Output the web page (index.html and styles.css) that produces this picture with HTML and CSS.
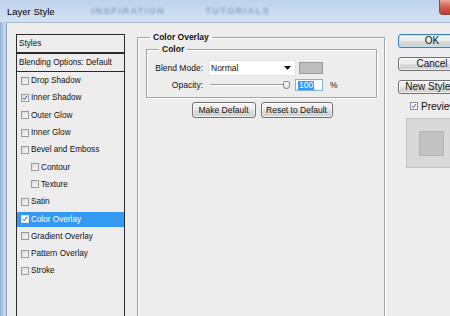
FILE: index.html
```html
<!DOCTYPE html>
<html lang="en">
<head>
  <meta charset="UTF-8" />
  <title>Layer Style</title>
  <link rel="stylesheet" href="styles.css">
</head>
<body>
  <div class="window">
    <!-- Title bar -->
    <div class="titlebar">
      <span class="title">Layer Style</span>
      <span class="watermark wm-first">INSPIRATION</span>
      <span class="watermark wm-second">TUTORIALS</span>
      <span class="close"></span>
    </div>

    <div class="frame">
      <div class="dialog">

        <!-- Styles list -->
        <div class="styles-panel">
          <div class="panel-head">Styles</div>
          <div class="panel-blend">Blending Options: Default</div>
          <ul class="style-list">
            <li class="item"><span class="check"></span>Drop Shadow</li>
            <li class="item"><span class="check checked"><svg viewBox="0 0 8 8"><path d="M1.4 4.2 L3.1 6.2 L6.6 1.4"/></svg></span>Inner Shadow</li>
            <li class="item"><span class="check"></span>Outer Glow</li>
            <li class="item"><span class="check"></span>Inner Glow</li>
            <li class="item"><span class="check"></span>Bevel and Emboss</li>
            <li class="item sub"><span class="check"></span>Contour</li>
            <li class="item sub"><span class="check"></span>Texture</li>
            <li class="item"><span class="check"></span>Satin</li>
            <li class="item selected"><span class="check checked"><svg viewBox="0 0 8 8"><path d="M1.4 4.2 L3.1 6.2 L6.6 1.4"/></svg></span>Color Overlay</li>
            <li class="item"><span class="check"></span>Gradient Overlay</li>
            <li class="item"><span class="check"></span>Pattern Overlay</li>
            <li class="item"><span class="check"></span>Stroke</li>
          </ul>
        </div>

        <!-- Settings -->
        <fieldset class="group-outer">
          <legend>Color Overlay</legend>
          <fieldset class="group-inner">
            <legend>Color</legend>
            <div class="row">
              <span class="label">Blend Mode:</span>
              <div class="select">
                <span>Normal</span>
                <svg class="arrow" viewBox="0 0 7 4"><path d="M0 0 H7 L3.5 4 Z"/></svg>
              </div>
              <span class="swatch"></span>
            </div>
            <div class="row row-opacity">
              <span class="label">Opacity:</span>
              <div class="slider">
                <span class="track"></span>
                <span class="thumb"></span>
              </div>
              <div class="num"><span class="sel-text">100</span></div>
              <span class="pct">%</span>
            </div>
          </fieldset>
          <div class="actions">
            <button class="btn btn-make">Make Default</button>
            <button class="btn btn-reset">Reset to Default</button>
          </div>
        </fieldset>

        <!-- Right column -->
        <div class="side">
          <button class="btn side-btn default">OK</button>
          <button class="btn side-btn">Cancel</button>
          <button class="btn side-btn">New Style...</button>
          <div class="preview-check">
            <span class="check checked"><svg viewBox="0 0 8 8"><path d="M1.4 4.2 L3.1 6.2 L6.6 1.4"/></svg></span>
            Preview
          </div>
          <div class="preview-box">
            <span class="preview-square"></span>
          </div>
        </div>

      </div>
    </div>
  </div>
</body>
</html>
```

FILE: styles.css
```css
* {
  box-sizing: border-box;
}

html, body {
  margin: 0;
  padding: 0;
}

body {
  width: 450px;
  height: 316px;
  overflow: hidden;
  font-family: 'Liberation Sans', Arial, sans-serif;
  color: #111;
}

.window {
  width: 450px;
  height: 316px;
  display: flex;
  flex-direction: column;
  background: linear-gradient(90deg, #8fb0d2, #c3d7ec 4px, #cddff1);
}

/* Title bar */
.titlebar {
  height: 22px;
  display: flex;
  align-items: center;
  background: linear-gradient(#bed3ea, #d3e2f2);
  flex-shrink: 0;
}

.title {
  margin-left: 7px;
  font-size: 9.5px;
  color: #000;
}

.watermark {
  font-size: 9px;
  font-weight: bold;
  letter-spacing: 1.5px;
  color: rgba(100, 125, 160, 0.6);
  filter: blur(1.1px);
}

.wm-first {
  margin-left: 37px;
}

.wm-second {
  margin-left: 40px;
}

.close {
  margin-left: auto;
  align-self: flex-start;
  width: 11px;
  height: 15px;
  border: 1px solid #8a4a44;
  border-right: none;
  border-top: none;
  border-radius: 0 0 0 4px;
  background: linear-gradient(#e9a99c, #d0604c 50%, #c0392b);
}

/* Frame and dialog body */
.frame {
  flex: 1;
  display: flex;
  padding-left: 6px;
  min-height: 0;
}

.dialog {
  flex: 1;
  display: flex;
  align-items: flex-start;
  background: #ededed;
  border-left: 1px solid #8da2b9;
  border-top: 1px solid #a9b9ca;
  padding: 11px 0 0 9px;
  overflow: hidden;
}

/* Styles panel */
.styles-panel {
  width: 109px;
  height: 300px;
  flex-shrink: 0;
  border: 1px solid #2a2a2a;
  font-size: 8.2px;
}

.panel-head,
.panel-blend {
  line-height: 17px;
  padding-left: 2px;
  white-space: nowrap;
}

.panel-head {
  height: 19px;
  border-bottom: 2px solid #2a2a2a;
}

.panel-blend {
  height: 18px;
  border-bottom: 1px solid #2a2a2a;
}

.style-list {
  list-style: none;
  margin: 0;
  padding: 1.2px 0 0;
}

.item {
  height: 15px;
  margin-bottom: 2.3px;
  display: flex;
  align-items: center;
  gap: 2px;
  padding-left: 4px;
  white-space: nowrap;
}

.item.sub {
  padding-left: 14px;
}

.item.selected {
  background: #3399f3;
  color: #fff;
}

.check {
  width: 8px;
  height: 8px;
  flex-shrink: 0;
  border: 1px solid #9a9a9a;
  background: linear-gradient(135deg, #dcdcdc, #f8f8f8);
  display: inline-flex;
}

.check svg {
  width: 100%;
  height: 100%;
  fill: none;
  stroke: #2446b8;
  stroke-width: 1.3;
}

.selected .check {
  background: #fff;
  border-color: #e0e0e0;
}

/* Group boxes */
fieldset {
  margin: 0;
  min-width: 0;
  border: 1px solid #a3a3a3;
  box-shadow: 1px 1px 0 #fff, inset 1px 1px 0 #fff;
}

legend {
  font-size: 8.5px;
  font-weight: bold;
  line-height: 10px;
  padding: 0 3px;
}

.group-outer {
  width: 248px;
  height: 300px;
  flex-shrink: 0;
  margin: -2px 0 0 12px;
  padding: 0 6px 0 8px;
}

.group-outer > legend {
  margin-left: 4px;
}

.group-inner {
  margin-top: 2px;
  padding: 6px 0;
  width: 231px;
}

.group-inner > legend {
  margin-left: 12px;
}

.row {
  display: flex;
  align-items: center;
  height: 16px;
  font-size: 8.5px;
}

.row-opacity {
  height: 12px;
  margin-top: 3px;
}

.label {
  width: 56px;
  text-align: right;
  flex-shrink: 0;
}

.select {
  width: 88px;
  height: 16px;
  margin-left: 5px;
  background: #fff;
  border: 1px solid #e4e4e4;
  display: flex;
  align-items: center;
  padding: 0 4px 0 2px;
  font-size: 8.5px;
}

.arrow {
  width: 7px;
  height: 4px;
  margin-left: auto;
  fill: #111;
}

.swatch {
  width: 24px;
  height: 12px;
  margin-left: 3px;
  background: #bdbdbd;
  border: 1px solid #999;
}

.slider {
  position: relative;
  width: 82px;
  height: 12px;
  margin-left: 5px;
}

.track {
  position: absolute;
  left: 2px;
  right: 4px;
  top: 5px;
  height: 2px;
  border-top: 1px solid #9a9a9a;
  border-bottom: 1px solid #fff;
}

.thumb {
  position: absolute;
  right: 0;
  top: 2px;
  width: 7px;
  height: 8px;
  border: 1px solid #8a8a8a;
  border-radius: 2px 2px 3px 3px;
  background: linear-gradient(#fdfdfd, #dedede);
}

.num {
  width: 28px;
  height: 12px;
  margin-left: 5px;
  background: #fff;
  border: 1px solid #7fb2e4;
  display: flex;
  align-items: center;
  padding-left: 2px;
}

.sel-text {
  background: #3399ff;
  color: #fff;
  line-height: 9px;
  padding: 0 1px;
}

.pct {
  margin-left: 7px;
}

/* Buttons */
.btn {
  font-family: inherit;
  font-size: 8.5px;
  color: #111;
  border: 1px solid #707070;
  border-radius: 3px;
  background: linear-gradient(#f3f3f3, #ebebeb 50%, #dcdcdc 51%, #cfcfcf);
  box-shadow: inset 0 0 0 1px rgba(255, 255, 255, 0.7);
  padding: 0;
  white-space: nowrap;
}

.actions {
  display: flex;
  justify-content: center;
  gap: 5px;
  margin-top: 4px;
}

.btn-make {
  width: 64px;
  height: 16px;
}

.btn-reset {
  width: 72px;
  height: 16px;
}

/* Right column */
.side {
  width: 68px;
  flex-shrink: 0;
  margin-left: 13px;
  display: flex;
  flex-direction: column;
}

.side-btn {
  height: 14px;
  font-size: 10px;
  line-height: 12px;
  margin-top: 9px;
}

.side-btn.default {
  margin-top: 0;
  border-color: #3c7fb1;
  box-shadow: inset 0 0 0 1px #bfe3f7;
}

.preview-check {
  height: 12px;
  margin-top: 6px;
  padding-left: 12px;
  display: flex;
  align-items: center;
  gap: 3px;
  font-size: 10px;
  white-space: nowrap;
}

.preview-check .check {
  background: #fff;
  border-color: #8e8e8e;
}

.preview-box {
  width: 51px;
  height: 50px;
  margin: 6px 0 0 8px;
  background: #d9d9d9;
  border: 1px solid #c4c4c4;
  display: flex;
  align-items: center;
  justify-content: center;
}

.preview-square {
  width: 25px;
  height: 25px;
  background: #c2c2c2;
  border: 1px solid #b3b3b3;
}
```
